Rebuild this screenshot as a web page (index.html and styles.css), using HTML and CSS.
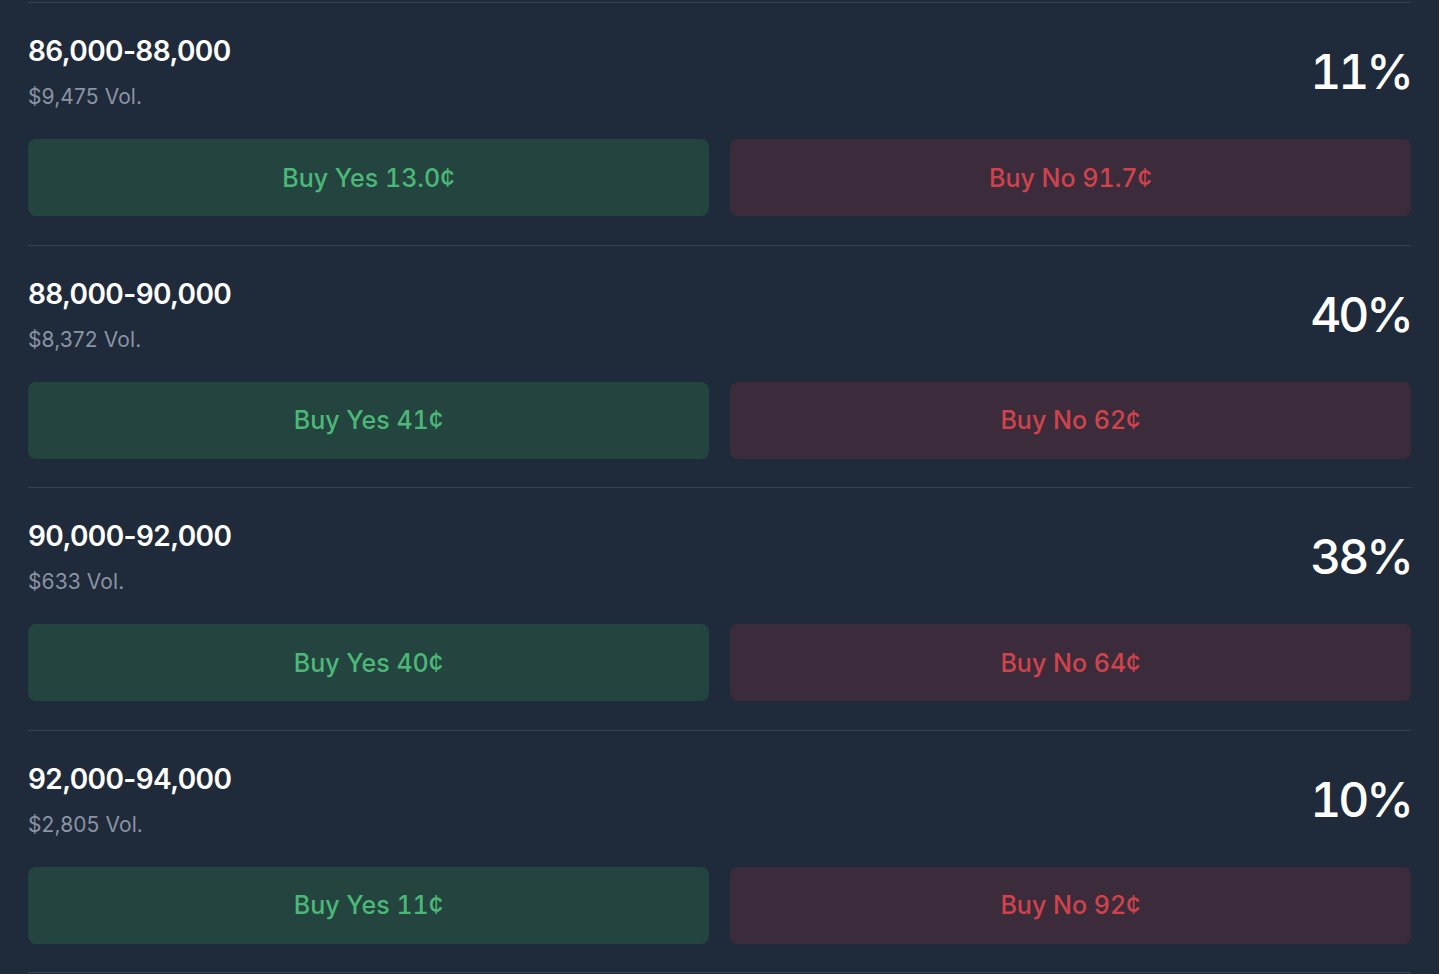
FILE: index.html
```html
<!DOCTYPE html>
<html lang="en">
<head>
<meta charset="utf-8">
<title>Outcomes</title>
<link rel="stylesheet" href="styles.css">
</head>
<body>
<div class="market-list">
  <div class="outcome">
    <div class="outcome-head">
      <div class="outcome-info">
        <div class="outcome-title">86,000-88,000</div>
        <div class="outcome-vol">$9,475 Vol.</div>
      </div>
      <div class="outcome-pct">11%</div>
    </div>
    <div class="outcome-actions">
      <button class="btn btn-yes">Buy Yes 13.0¢</button>
      <button class="btn btn-no">Buy No 91.7¢</button>
    </div>
  </div>
  <div class="outcome">
    <div class="outcome-head">
      <div class="outcome-info">
        <div class="outcome-title">88,000-90,000</div>
        <div class="outcome-vol">$8,372 Vol.</div>
      </div>
      <div class="outcome-pct">40%</div>
    </div>
    <div class="outcome-actions">
      <button class="btn btn-yes">Buy Yes 41¢</button>
      <button class="btn btn-no">Buy No 62¢</button>
    </div>
  </div>
  <div class="outcome">
    <div class="outcome-head">
      <div class="outcome-info">
        <div class="outcome-title">90,000-92,000</div>
        <div class="outcome-vol">$633 Vol.</div>
      </div>
      <div class="outcome-pct">38%</div>
    </div>
    <div class="outcome-actions">
      <button class="btn btn-yes">Buy Yes 40¢</button>
      <button class="btn btn-no">Buy No 64¢</button>
    </div>
  </div>
  <div class="outcome last">
    <div class="outcome-head">
      <div class="outcome-info">
        <div class="outcome-title">92,000-94,000</div>
        <div class="outcome-vol">$2,805 Vol.</div>
      </div>
      <div class="outcome-pct">10%</div>
    </div>
    <div class="outcome-actions">
      <button class="btn btn-yes">Buy Yes 11¢</button>
      <button class="btn btn-no">Buy No 92¢</button>
    </div>
  </div>
</div>
</body>
</html>
```

FILE: styles.css
```css
html, body {
  margin: 0;
  padding: 0;
  background: #1f2a3b;
  font-family: Inter, "Noto Sans", "Liberation Sans", sans-serif;
  color: #ffffff;
}

.market-list {
  padding: 2px 28px 0;
}

.outcome {
  border-top: 1px solid #344255;
  padding: 30px 0 28.5px;
}

.outcome.last {
  border-bottom: 1px solid #344255;
}

.outcome-head {
  display: flex;
  align-items: center;
  justify-content: space-between;
  height: 78px;
}

.outcome-title {
  font-size: 28px;
  line-height: 36px;
  font-weight: 600;
  letter-spacing: -0.6px;
  color: #ffffff;
}

.outcome-vol {
  margin-top: 14px;
  font-size: 21px;
  line-height: 28px;
  letter-spacing: 0.1px;
  color: #8a94a3;
}

.outcome-pct {
  font-size: 48px;
  line-height: 50px;
  font-weight: 500;
  font-variant-numeric: tabular-nums;
  letter-spacing: -3px;
  color: #ffffff;
}

.outcome-actions {
  display: flex;
  gap: 21px;
  margin-top: 28px;
}

.btn {
  flex: 1;
  height: 77px;
  border: none;
  border-radius: 8px;
  font-family: inherit;
  font-variant-numeric: tabular-nums;
  font-size: 25px;
  font-weight: 500;
  cursor: pointer;
}

.btn-yes {
  background: #23443f;
  color: #4cb877;
}

.btn-no {
  background: #3c2c3b;
  color: #d0434c;
}
```
